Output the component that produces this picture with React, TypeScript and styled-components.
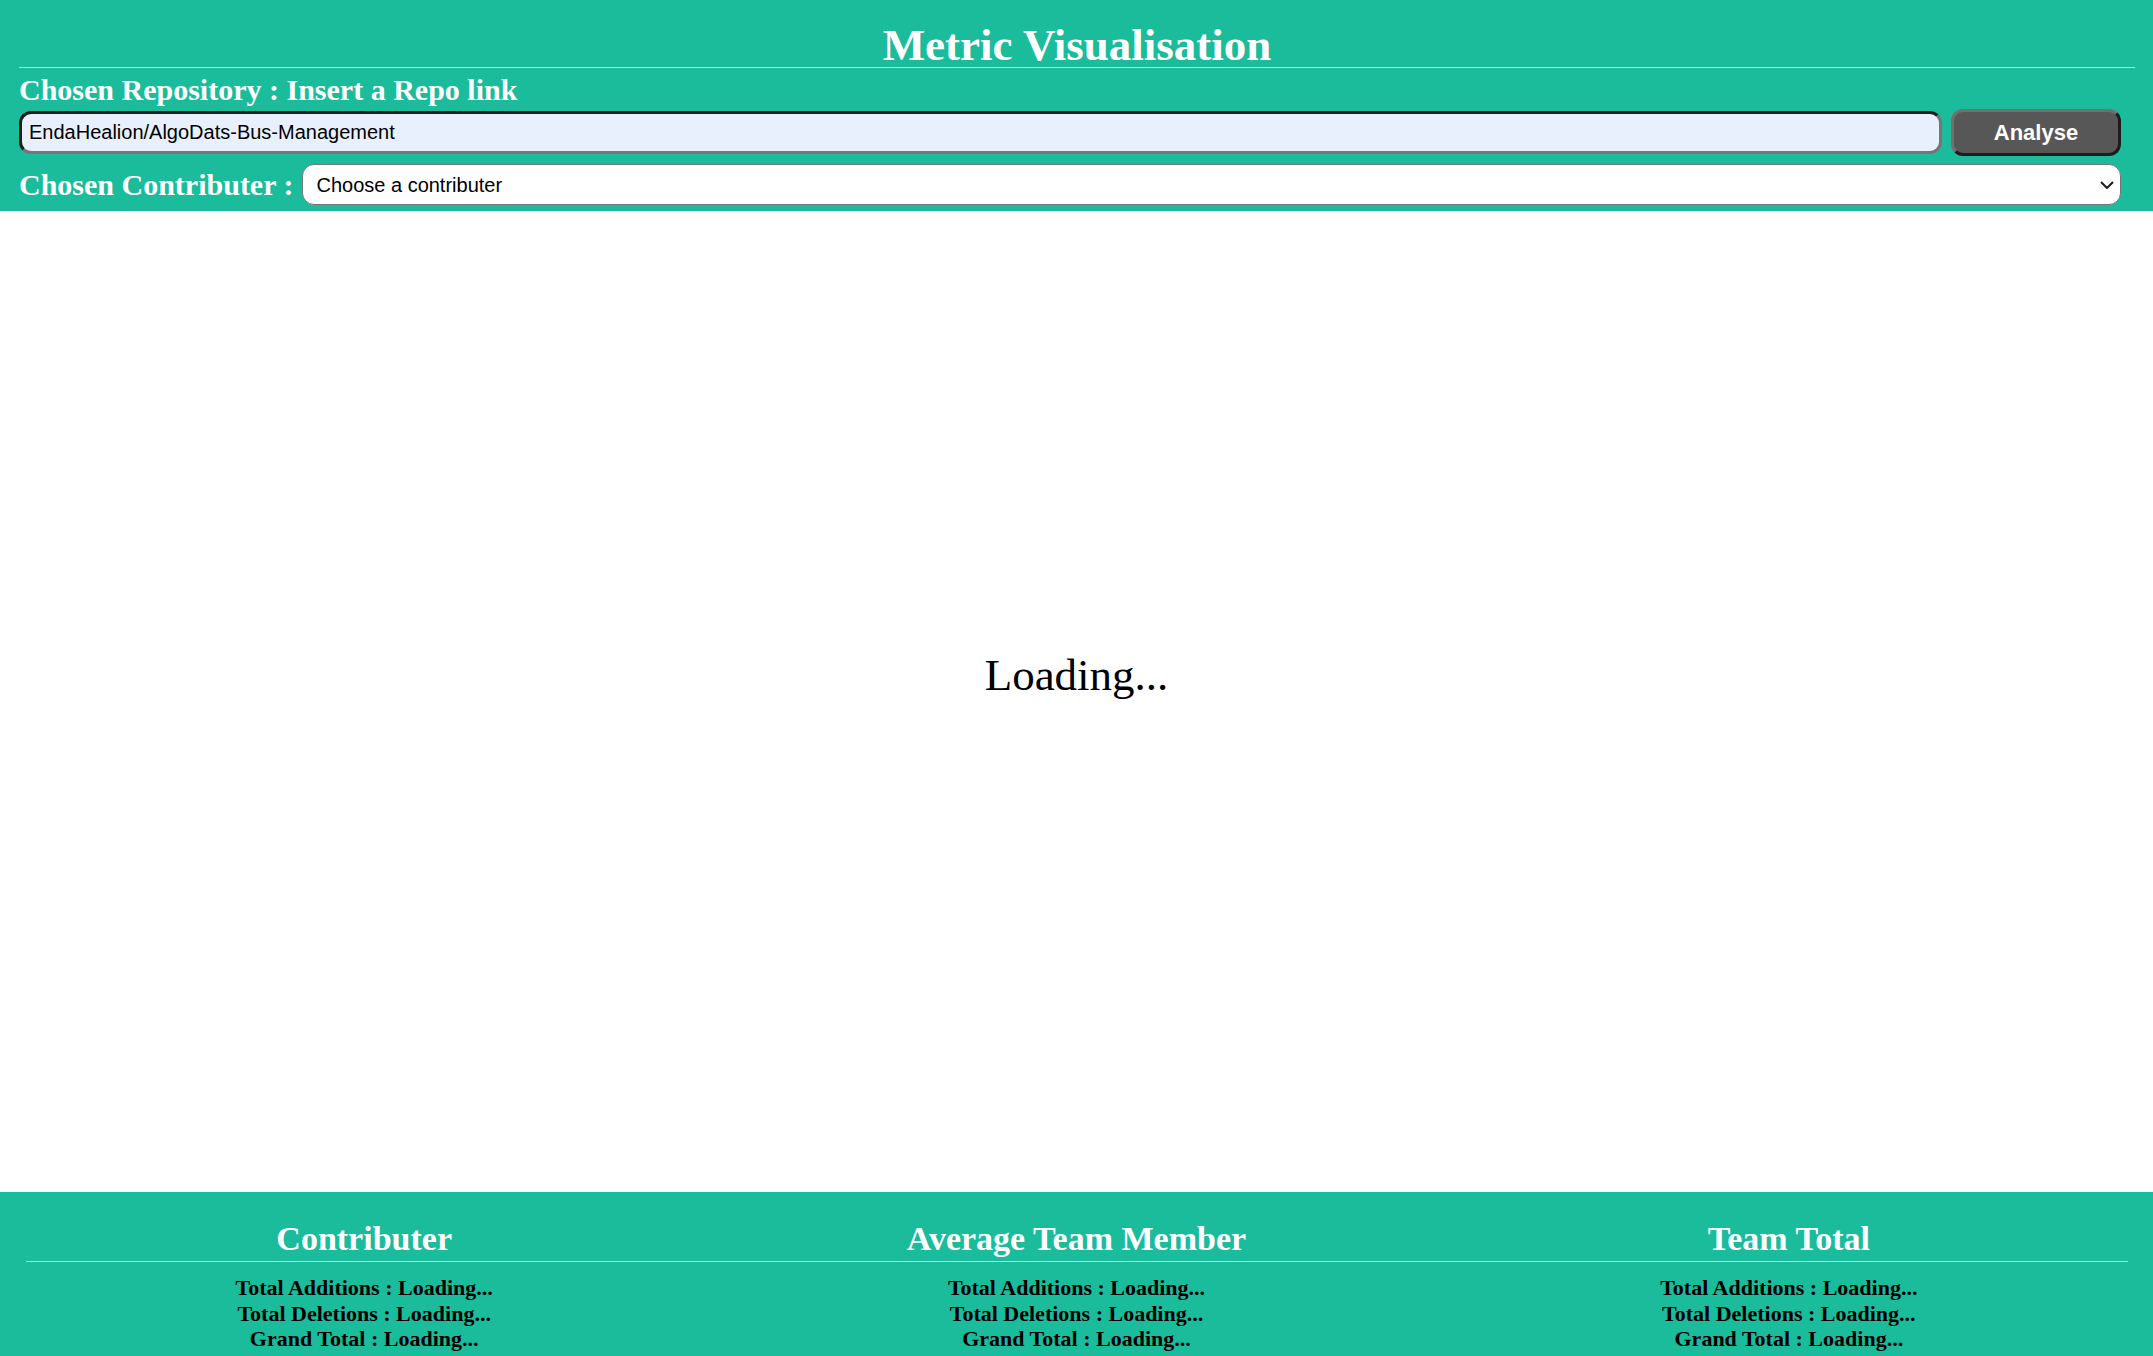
import { FunctionComponent } from "react";
import styled, { createGlobalStyle } from "styled-components";

const GlobalStyle = createGlobalStyle`
  html, body {
    margin: 0;
    padding: 0;
    background: #ffffff;
    font-family: "Liberation Serif", "Times New Roman", serif;
  }
`;

const Header = styled.header`
  background: #1abc9c;
  padding: 23px 18px 6px 19px;
  display: flex;
  flex-direction: column;
`;
const Title = styled.h1`
  margin: 0;
  font-size: 45px;
  line-height: 44px;
  font-weight: 700;
  color: #ffffff;
  text-align: center;
`;
const Rule = styled.div`
  height: 1px;
  background: #d6d6d6;
`;
const Label = styled.div`
  font-size: 30px;
  line-height: 34px;
  font-weight: 700;
  color: #ffffff;
  white-space: nowrap;
`;
const RepoLabel = styled(Label)`
  margin-top: 5px;
`;
const FormRow = styled.div<{ $top?: number }>`
  display: flex;
  flex-direction: row;
  align-items: center;
  gap: 9px;
  margin-top: ${(p) => p.$top ?? 0}px;
  padding-right: 14px;
`;
const RepoInput = styled.input`
  flex: 1;
  height: 43px;
  box-sizing: border-box;
  padding: 0 7px;
  border-width: 3px;
  border-style: solid;
  border-color: #1f1f1f #767676 #767676 #1f1f1f;
  border-radius: 12px;
  background: #e8f0fe;
  color: #000000;
  font-family: "Liberation Sans", Arial, sans-serif;
  font-size: 20px;
  outline: none;
`;
const AnalyseButton = styled.button`
  width: 170px;
  height: 47px;
  box-sizing: border-box;
  border-width: 3px;
  border-style: solid;
  border-color: #707070 #1c1c1c #1c1c1c #707070;
  border-radius: 12px;
  background: #575757;
  color: #ffffff;
  font-family: "Liberation Sans", Arial, sans-serif;
  font-weight: 700;
  font-size: 22px;
  cursor: pointer;
`;
const SelectWrap = styled.div`
  flex: 1;
  position: relative;
  display: flex;
`;
const ContributerSelect = styled.select`
  flex: 1;
  appearance: none;
  height: 41px;
  box-sizing: border-box;
  padding: 0 30px 0 13px;
  border: 1px solid #767676;
  border-radius: 12px;
  background: #ffffff;
  color: #000000;
  font-family: "Liberation Sans", Arial, sans-serif;
  font-size: 20px;
`;
const Chevron = styled.svg`
  position: absolute;
  right: 7px;
  top: 17px;
  width: 14px;
  height: 8px;
  pointer-events: none;
`;

const Main = styled.main`
  height: 981px;
  box-sizing: border-box;
  padding-top: 438px;
  background: #ffffff;
`;
const LoadingText = styled.div`
  font-size: 45px;
  line-height: 52px;
  color: #000000;
  text-align: center;
`;

const Footer = styled.footer`
  background: #1abc9c;
  padding: 28px 8px 8px;
`;
const Columns = styled.div`
  display: grid;
  grid-template-columns: repeat(3, 1fr);
`;
const ColumnHeading = styled.h2`
  margin: 0;
  font-size: 34px;
  line-height: 38px;
  font-weight: 700;
  color: #ffffff;
  text-align: center;
`;
const FooterRule = styled(Rule)`
  margin: 3px 17px 13px 18px;
`;
const Stats = styled.div`
  display: flex;
  flex-direction: column;
  align-items: center;
`;
const StatLine = styled.div`
  font-size: 22px;
  line-height: 25.5px;
  font-weight: 700;
  color: #000000;
  white-space: nowrap;
`;

const columns = ["Contributer", "Average Team Member", "Team Total"];
const statLabels = ["Total Additions", "Total Deletions", "Grand Total"];

const App: FunctionComponent = () => {
  return (
    <>
      <GlobalStyle />
      <Header>
        <Title>Metric Visualisation</Title>
        <Rule />
        <RepoLabel>Chosen Repository : Insert a Repo link</RepoLabel>
        <FormRow $top={2}>
          <RepoInput
            type="text"
            defaultValue="EndaHealion/AlgoDats-Bus-Management"
          />
          <AnalyseButton>Analyse</AnalyseButton>
        </FormRow>
        <FormRow $top={8}>
          <Label>Chosen Contributer :</Label>
          <SelectWrap>
            <ContributerSelect defaultValue="">
              <option value="">Choose a contributer</option>
            </ContributerSelect>
            <Chevron viewBox="0 0 14 8">
              <path
                d="M1 1 L7 7 L13 1"
                fill="none"
                stroke="#1a1a1a"
                strokeWidth="2"
              />
            </Chevron>
          </SelectWrap>
        </FormRow>
      </Header>
      <Main>
        <LoadingText>Loading...</LoadingText>
      </Main>
      <Footer>
        <Columns>
          {columns.map((c) => (
            <ColumnHeading key={c}>{c}</ColumnHeading>
          ))}
        </Columns>
        <FooterRule />
        <Columns>
          {columns.map((c) => (
            <Stats key={c}>
              {statLabels.map((s) => (
                <StatLine key={s}>{s} : Loading...</StatLine>
              ))}
            </Stats>
          ))}
        </Columns>
      </Footer>
    </>
  );
};

export default App;
